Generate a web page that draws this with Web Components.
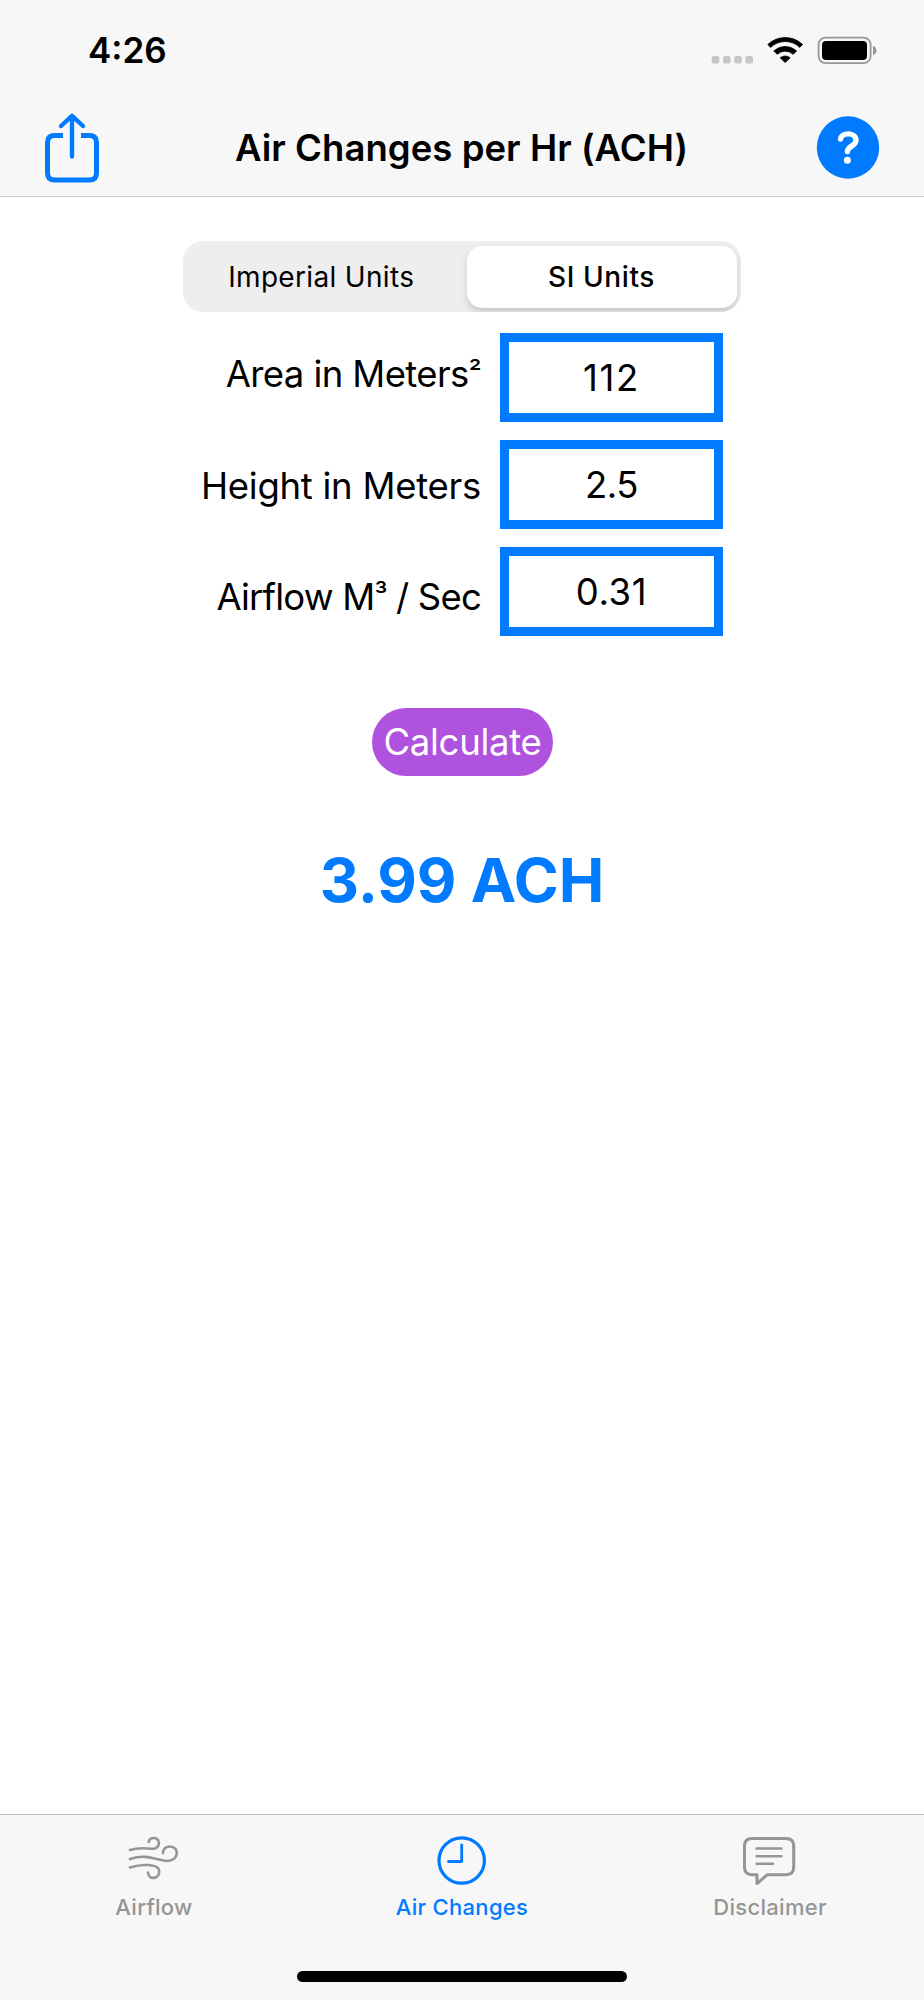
<!DOCTYPE html>
<html lang="en">
<head>
<meta charset="utf-8">
<title>Air Changes per Hr</title>
<style>
    body {
        margin: 0;
        background: #fff;
        font-family: Inter, "Liberation Sans", sans-serif;
        color: #000;
    }
</style>
</head>
<body>
<ach-app></ach-app>

<script>
class StatusBar extends HTMLElement {
    connectedCallback() {
        this.attachShadow({ mode: 'open' });
        this.shadowRoot.innerHTML = `
            <style>
                :host {
                    display: flex;
                    justify-content: space-between;
                    height: 101px;
                    padding: 0 47px 0 88px;
                    box-sizing: border-box;
                }

                .time {
                    font-size: 35px;
                    font-weight: 600;
                    line-height: 42px;
                    margin-top: 29px;
                }

                svg {
                    display: block;
                    margin-top: 35px;
                }
            </style>
            <div class="time"><slot></slot></div>
            <svg width="166" height="30" viewBox="711 35 166 30">
                <g fill="#c6c6c6">
                    <rect x="711.7" y="56" width="7.6" height="7.4" rx="2"/>
                    <rect x="723" y="56" width="7.6" height="7.4" rx="2"/>
                    <rect x="734.2" y="56" width="7.6" height="7.4" rx="2"/>
                    <rect x="745.4" y="56" width="7.6" height="7.4" rx="2"/>
                </g>
                <path d="M767.8 44.4 A25.5 25.5 0 0 1 802.6 44.4 L799.8 47.4 A21 21 0 0 0 770.6 47.4Z M773.8 51 A16.5 16.5 0 0 1 796.6 51 L793.1 54.3 A11.5 11.5 0 0 0 777.3 54.3Z M780.2 57.8 A8.6 8.6 0 0 1 790.2 57.800 L785.2 62.6Z" stroke="#000" stroke-width="0.8" stroke-linejoin="round"/>
                <rect x="818.6" y="37.6" width="52" height="25.6" rx="7" fill="none" stroke="#989898" stroke-width="1.8"/>
                <rect x="822" y="41" width="45" height="19" rx="4"/>
                <path d="M873 45.8 C877.6 47.2 877.6 53.6 873 55Z" fill="#989898"/>
            </svg>
        `;
    }
}

class NavBar extends HTMLElement {
    connectedCallback() {
        this.attachShadow({ mode: 'open' });
        this.shadowRoot.innerHTML = `
            <style>
                :host {
                    display: flex;
                    align-items: flex-start;
                    justify-content: space-between;
                    height: 95px;
                    padding: 0 44px 0 43px;
                    box-sizing: border-box;
                }

                h1 {
                    margin: 24px 0 0 6px;
                    font-size: 36.5px;
                    font-weight: 600;
                    line-height: 46px;
                    letter-spacing: 0.05px;
                    white-space: nowrap;
                }

                .share {
                    margin-top: 10px;
                }

                .help {
                    margin-top: 14px;
                }
            </style>
            <svg class="share" width="58" height="74" viewBox="43 111 58 74" fill="none" stroke="#007aff" stroke-width="5">
                <path d="M63 135.5 H54.5 Q47.5 135.5 47.5 142.5 V173 Q47.5 180 54.5 180 H89.5 Q96.5 180 96.5 173 V142.5 Q96.5 135.5 89.5 135.5 H81"/>
                <path d="M72 156.5 V117 M61 126 L72 115.8 L83 126" stroke-width="4.4" stroke-linecap="round" stroke-linejoin="round"/>
            </svg>
            <h1><slot></slot></h1>
            <svg class="help" width="64" height="64" viewBox="816 115 64 64">
                <circle cx="848" cy="147.5" r="31.2" fill="#007aff"/>
                <path d="M840.6 139 C841.5 132 856 131.800 856 140.300 C856 146.2 847.4 146 847.4 151.600" fill="none" stroke="#fff" stroke-width="5.4" stroke-linecap="round"/>
                <circle cx="847.4" cy="160.2" r="3.5" fill="#fff"/>
            </svg>
        `;
    }
}

class UnitSwitch extends HTMLElement {
    connectedCallback() {
        this.attachShadow({ mode: 'open' });
        this.shadowRoot.innerHTML = `
            <style>
                :host {
                    display: grid;
                    grid-template-columns: 1fr 270px;
                    gap: 7px;
                    width: 558px;
                    height: 71px;
                    margin: 44px 0 0 183px;
                    padding: 5px 4.5px 5px 0;
                    box-sizing: border-box;
                    border-radius: 20px;
                    background: #eee;
                    overflow: hidden;
                    font-size: 28px;
                    line-height: 62px;
                    letter-spacing: 0.33px;
                    text-align: center;
                }

                .selected {
                    height: 62px;
                    border-radius: 15px;
                    background: #fff;
                    box-shadow: 0 4px 8px rgba(0, 0, 0, 0.13), 0 3px 1px rgba(0, 0, 0, 0.04);
                    font-weight: 500;
                    letter-spacing: 0.6px;
                }
            </style>
            <div><slot name="left"></slot></div>
            <div class="selected"><slot name="right"></slot></div>
        `;
    }
}

class FieldRow extends HTMLElement {
    connectedCallback() {
        this.attachShadow({ mode: 'open' });
        this.shadowRoot.innerHTML = `
            <style>
                :host {
                    display: grid;
                    grid-template-columns: 481px 223px;
                    column-gap: 19px;
                    height: 89px;
                    font-size: 36.5px;
                    line-height: 46px;
                    white-space: nowrap;
                }

                .label {
                    text-align: right;
                    padding-top: var(--label-top, 21px);
                    letter-spacing: var(--label-spacing, 0);
                }

                .value {
                    height: 89px;
                    box-sizing: border-box;
                    border: 9px solid #007aff;
                    padding-top: 13px;
                    letter-spacing: var(--value-spacing, 0);
                    text-align: center;
                }
            </style>
            <div class="label"><slot></slot></div>
            <div class="value">${this.getAttribute('value')}</div>
        `;
    }
}

class TabItem extends HTMLElement {
    connectedCallback() {
        this.attachShadow({ mode: 'open' });
        this.shadowRoot.innerHTML = `
            <style>
                :host {
                    display: flex;
                    flex-direction: column;
                    align-items: center;
                    color: #959595;
                    font-size: 22px;
                    font-weight: 500;
                    line-height: 28px;
                    letter-spacing: 0.3px;
                    white-space: nowrap;
                }

                :host([active]) {
                    color: #007aff;
                }

                .icon {
                    height: 78px;
                    padding-top: 15px;
                    box-sizing: border-box;
                }
            </style>
            <div class="icon"><slot name="icon"></slot></div>
            <div><slot></slot></div>
        `;
    }
}

class TabBar extends HTMLElement {
    connectedCallback() {
        this.attachShadow({ mode: 'open' });
        this.shadowRoot.innerHTML = `
            <style>
                :host {
                    display: flex;
                    flex-direction: column;
                    justify-content: space-between;
                    align-items: center;
                    height: 186px;
                    box-sizing: border-box;
                    border-top: 1px solid #bdbdbd;
                    background: #f7f7f7;
                    padding-bottom: 18px;
                }

                .tabs {
                    display: grid;
                    grid-template-columns: repeat(3, 308px);
                }

                .home {
                    width: 330px;
                    height: 11px;
                    border-radius: 6px;
                    background: #000;
                }
            </style>
            <div class="tabs"><slot></slot></div>
            <div class="home"></div>
        `;
    }
}

class AchApp extends HTMLElement {
    connectedCallback() {
        this.attachShadow({ mode: 'open' });
        this.shadowRoot.innerHTML = `
            <style>
                :host {
                    display: flex;
                    flex-direction: column;
                    width: 924px;
                    height: 2000px;
                }

                header {
                    height: 197px;
                    box-sizing: border-box;
                    border-bottom: 1px solid #c9c9c9;
                    background: #f7f7f7;
                }

                main {
                    flex: 1;
                }

                .fields {
                    display: grid;
                    row-gap: 18px;
                    margin-top: 21px;
                }

                .area {
                    --label-top: 18px;
                    --label-spacing: -0.6px;
                    --value-spacing: 1.6px;
                }

                .height {
                    --label-top: 23px;
                    --label-spacing: -0.26px;
                    --value-spacing: -0.4px;
                }

                .airflow {
                    --label-top: 27px;
                    --label-spacing: -0.8px;
                    --value-spacing: 0.6px;
                }

                /* narrower exponent than the font's own */
                .exp {
                    font-size: 29px;
                    line-height: 0;
                    vertical-align: 4px;
                }

                button {
                    display: block;
                    width: 181px;
                    height: 68px;
                    margin: 72px 0 0 372px;
                    padding: 0;
                    border: 0;
                    border-radius: 34px;
                    background: #af52de;
                    color: #fff;
                    font: 400 36.5px/68px Inter, "Liberation Sans", sans-serif;
                    letter-spacing: -0.29px;
                }

                .result {
                    margin-top: 67px;
                    color: #007aff;
                    font-size: 61px;
                    font-weight: 700;
                    line-height: 74px;
                    letter-spacing: -0.07px;
                    text-align: center;
                }

                svg {
                    display: block;
                }
            </style>
            <header>
                <status-bar>4:26</status-bar>
                <nav-bar>Air Changes per Hr (ACH)</nav-bar>
            </header>
            <main>
                <unit-switch>
                    <span slot="left">Imperial Units</span>
                    <span slot="right">SI Units</span>
                </unit-switch>
                <div class="fields">
                    <field-row class="area" value="112">Area in Meters<span class="exp">²</span></field-row>
                    <field-row class="height" value="2.5">Height in Meters</field-row>
                    <field-row class="airflow" value="0.31">Airflow M<span class="exp">³</span> / Sec</field-row>
                </div>
                <button>Calculate</button>
                <div class="result">3.99 ACH</div>
            </main>
            <tab-bar>
                <tab-item>
                    <svg slot="icon" width="60" height="60" viewBox="124 1830 60 60" fill="none" stroke="currentColor" stroke-width="2.6" stroke-linecap="round">
                        <path d="M130 1850 C143 1846 150 1850 155 1848.5 C161 1846 159.5 1838 153.7 1838 C150.5 1838 149 1840 148.7 1842"/>
                        <path d="M130 1859 C148 1853 157 1861 168 1861 C179 1860 180 1846.5 169.5 1846.5 C165 1846.5 162.8 1850 163 1853"/>
                        <path d="M130 1867.5 C141 1864 158 1863.5 159.2 1870.5 C160 1880 148 1880 148 1872.5"/>
                    </svg>
                    Airflow
                </tab-item>
                <tab-item active>
                    <svg slot="icon" width="60" height="60" viewBox="432 1830 60 60" fill="none" stroke="currentColor" stroke-linecap="round" stroke-linejoin="round">
                        <circle cx="461.7" cy="1860.5" r="22.7" stroke-width="3.2"/>
                        <path d="M461.7 1845 V1861.5 H448.5" stroke-width="2.8"/>
                    </svg>
                    Air Changes
                </tab-item>
                <tab-item>
                    <svg slot="icon" width="60" height="60" viewBox="740 1830 60 60" fill="none" stroke="currentColor" stroke-width="3" stroke-linecap="round" stroke-linejoin="round">
                        <path d="M752 1838.5 H786 Q793.7 1838.5 793.7 1846 V1867 Q793.7 1874.7 786 1874.7 H767.5 L757 1883.5 V1874.7 H752 Q744.5 1874.7 744.5 1867 V1846 Q744.5 1838.5 752 1838.5Z"/>
                        <path d="M756.5 1848.5 H781.5 M756.5 1856.3 H781.5 M756.5 1863.7 H773" stroke-width="2.4"/>
                    </svg>
                    Disclaimer
                </tab-item>
            </tab-bar>
        `;
    }
}

customElements.define('status-bar', StatusBar);
customElements.define('nav-bar', NavBar);
customElements.define('unit-switch', UnitSwitch);
customElements.define('field-row', FieldRow);
customElements.define('tab-item', TabItem);
customElements.define('tab-bar', TabBar);
customElements.define('ach-app', AchApp);
</script>
</body>
</html>
